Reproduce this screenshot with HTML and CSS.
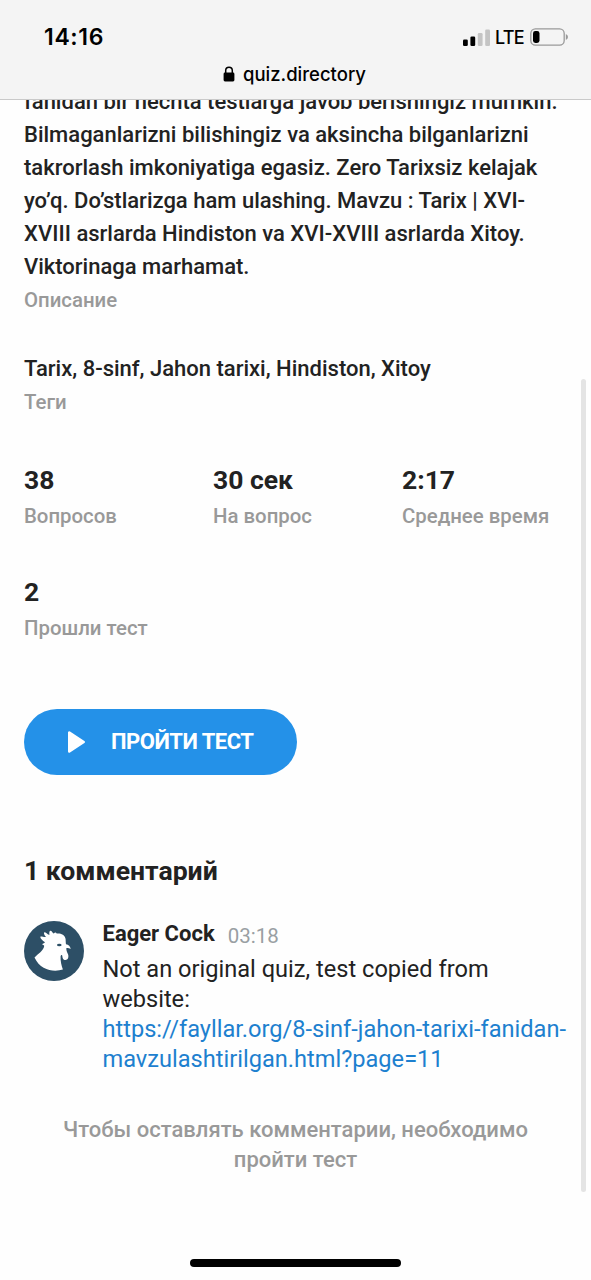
FILE: index.html
```html
<!DOCTYPE html>
<html lang="ru">
<head>
<meta charset="utf-8">
<title>quiz.directory</title>
<link rel="stylesheet" href="styles.css">
</head>
<body>
<div class="screen">
  <header class="browser-bar">
    <div class="status">
      <span class="clock">14:16</span>
      <div class="indicators">
        <svg class="signal" width="27" height="17" viewBox="0 0 27 17">
          <rect x="0" y="10.5" width="4.8" height="6.5" rx="1.3"/>
          <rect x="7.4" y="7.5" width="4.8" height="9.5" rx="1.3"/>
          <rect class="off" x="14.8" y="4" width="4.8" height="13" rx="1.3"/>
          <rect class="off" x="22.2" y="0.5" width="4.8" height="16.5" rx="1.3"/>
        </svg>
        <span class="network">LTE</span>
        <svg class="battery" width="39" height="18" viewBox="0 0 39 18">
          <rect x=".8" y=".8" width="33.4" height="16.4" rx="4.6" fill="none" stroke="#999" stroke-width="1.3"/>
          <rect x="3" y="3" width="6.5" height="12" rx="2.4"/>
          <path d="M35.8 6v6q2.2-1 2.2-3t-2.2-3z" fill="#999"/>
        </svg>
      </div>
    </div>
    <div class="address">
      <svg width="12" height="16" viewBox="0 0 12 16"><path d="M2.7 7V4.5a3.3 3.3 0 0 1 6.6 0V7" fill="none" stroke="#000" stroke-width="1.5"/><rect x=".6" y="6.5" width="10.8" height="9" rx="1.4"/></svg>
      <span>quiz.directory</span>
    </div>
  </header>

  <main class="content">
    <section class="description">
      <p class="text">fanidan bir nechta testlarga javob berishingiz mumkin.<br>Bilmaganlarizni bilishingiz va aksincha bilganlarizni<br>takrorlash imkoniyatiga egasiz. Zero Tarixsiz kelajak<br>yo’q. Do’stlarizga ham ulashing. Mavzu : Tarix | XVI-<br>XVIII asrlarda Hindiston va XVI-XVIII asrlarda Xitoy.<br>Viktorinaga marhamat.</p>
      <div class="label">Описание</div>
    </section>
    <section class="tags">
      <p class="text">Tarix, 8-sinf, Jahon tarixi, Hindiston, Xitoy</p>
      <div class="label">Теги</div>
    </section>
    <section class="stats">
      <div><div class="value">38</div><div class="label">Вопросов</div></div>
      <div><div class="value">30 сек</div><div class="label">На вопрос</div></div>
      <div><div class="value">2:17</div><div class="label">Среднее время</div></div>
      <div><div class="value">2</div><div class="label">Прошли тест</div></div>
    </section>
    <a class="start">
      <svg width="20" height="24" viewBox="0 0 20 24"><path d="M2.3 2.5v19L16.7 12z" fill="#fff" stroke="#fff" stroke-width="2.6" stroke-linejoin="round"/></svg>
      <span>ПРОЙТИ ТЕСТ</span>
    </a>
    <h2 class="comments-title">1 комментарий</h2>
    <article class="comment">
      <svg class="avatar" width="60" height="60" viewBox="0 0 60 60">
        <circle cx="30" cy="30" r="30" fill="#2d4f66"/>
        <path fill="#fff" d="M21 21.3C18.500 19.500 16.300 17.500 16.300 16C16.500 14.700 19.500 16.300 22 16C20.500 14.500 19.300 12 20.500 11.300C22 10.700 23.500 14 25.500 13.800C25 11.500 25.400 9.700 26.700 9.800C28.200 10 28.300 12.300 29.800 12.600C31 11 32 11.400 32.700 12.600C36 12 41 13.500 41.600 18C41.700 20 41.800 22 42 23.300C44.500 23.700 46.400 25.500 46.700 28C45.200 27.200 43.700 26.800 42.300 27.200C42.300 29.500 42.900 31 43.900 33C45.200 36 43.800 39 41.500 39C39 39 38.400 36.800 38.300 34.700C38 33.200 36.600 34 36.600 35.500C36.300 40 37.500 44.500 38.900 48.500C30 51.300 16.500 49.500 10.500 36.500C14 33 19.500 29.500 20.200 25C20.100 23.400 17.500 24 18.400 22.900C19.500 22.400 20.400 22.100 21 21.300Z"/>
        <ellipse cx="35.3" cy="24" rx="2.3" ry="1.2" fill="#2d4f66"/>
      </svg>
      <div class="comment-body">
        <div class="comment-head"><strong>Eager Cock</strong><time>03:18</time></div>
        <p>Not an original quiz, test copied from<br>website:<br><a>https://fayllar.org/8-sinf-jahon-tarixi-fanidan-<br>mavzulashtirilgan.html?page=11</a></p>
      </div>
    </article>
    <p class="notice">Чтобы оставлять комментарии, необходимо<br>пройти тест</p>
  </main>
  <div class="scrollbar"></div>
  <div class="home-indicator"></div>
</div>
</body>
</html>
```
FILE: styles.css
```css
* { box-sizing: border-box; }
body { margin: 0; background: #fefefe; }
p, h2 { margin: 0; }
.screen { position: relative; width: 591px; height: 1280px; overflow: hidden; font-family: Roboto, sans-serif; color: #222; }
.browser-bar { position: relative; z-index: 1; height: 100px; padding: 22px 22px 0 44px; background: #f4f4f4; border-bottom: 1px solid #c9c9c9; color: #000; font-family: Inter, sans-serif; }
.status { display: flex; justify-content: space-between; align-items: center; height: 30px; }
.clock { font-size: 23px; font-weight: 600; letter-spacing: .65px; }
.indicators { display: flex; align-items: center; }
.signal .off { fill: #c4c4c4; }
.network { margin: 0 6px 0 5px; font-size: 18px; font-weight: 500; letter-spacing: -.7px; }
.address { display: flex; align-items: center; gap: 8px; height: 24px; margin: 10px 0 0 179px; font-size: 18.5px; font-weight: 500; }
.content { padding: 0 24px; margin-top: -15px; white-space: nowrap; }
.text { font-size: 22px; line-height: 33.1px; font-weight: 500; }
.label { font-size: 20.4px; line-height: 30px; font-weight: 500; color: #999; }
.description .label { padding-top: 1px; }
.tags .label { padding-top: 2px; }
.tags { margin-top: 37px; }
.stats { display: grid; grid-template-columns: repeat(3, 189px); row-gap: 43px; margin-top: 45px; }
.value { height: 39px; font-size: 26.5px; line-height: 36px; font-weight: 700; }
.start { display: flex; align-items: center; gap: 24px; width: 273px; height: 66px; margin-top: 66px; padding-left: 43px; border-radius: 33px; background: #2491e8; color: #fff; font-size: 22px; font-weight: 700; letter-spacing: -.5px; }
.comments-title { margin-top: 77px; font-size: 26.6px; line-height: 38px; font-weight: 700; }
.comment { display: flex; gap: 18.5px; margin-top: 31.5px; }
.comment-head { display: flex; align-items: flex-start; gap: 13px; height: 32.5px; font-size: 22px; }
.comment-head strong { line-height: 26px; }
.comment-head time { font-size: 20.5px; line-height: 30px; color: #999fa3; }
.comment p { font-size: 23.6px; line-height: 30px; }
.comment a { color: #1d80cf; }
.notice { margin-top: 41px; text-align: center; font-size: 22px; line-height: 30px; font-weight: 500; color: #999; }
.scrollbar { position: absolute; left: 581px; top: 379px; width: 5px; height: 813px; border-radius: 3px; background: #e4e4e4; }
.home-indicator { position: absolute; left: 190px; top: 1259px; width: 211px; height: 8px; border-radius: 4px; background: #000; }
```
